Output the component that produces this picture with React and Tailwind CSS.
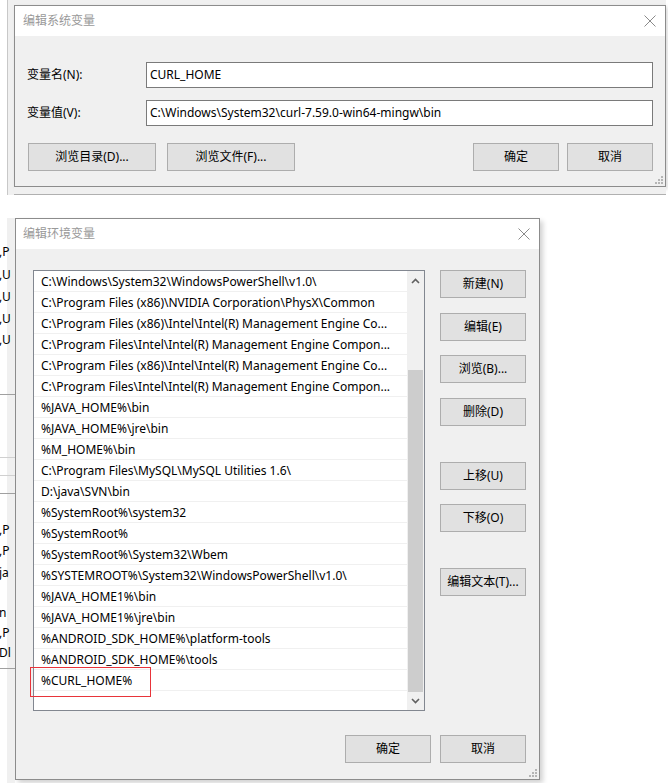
import React from 'react';

const font = { fontFamily: '"Noto Sans", "Noto Sans CJK SC", sans-serif' };

const paths = [
    'C:\\Windows\\System32\\WindowsPowerShell\\v1.0\\',
    'C:\\Program Files (x86)\\NVIDIA Corporation\\PhysX\\Common',
    'C:\\Program Files (x86)\\Intel\\Intel(R) Management Engine Co...',
    'C:\\Program Files\\Intel\\Intel(R) Management Engine Compon...',
    'C:\\Program Files (x86)\\Intel\\Intel(R) Management Engine Co...',
    'C:\\Program Files\\Intel\\Intel(R) Management Engine Compon...',
    '%JAVA_HOME%\\bin',
    '%JAVA_HOME%\\jre\\bin',
    '%M_HOME%\\bin',
    'C:\\Program Files\\MySQL\\MySQL Utilities 1.6\\',
    'D:\\java\\SVN\\bin',
    '%SystemRoot%\\system32',
    '%SystemRoot%',
    '%SystemRoot%\\System32\\Wbem',
    '%SYSTEMROOT%\\System32\\WindowsPowerShell\\v1.0\\',
    '%JAVA_HOME1%\\bin',
    '%JAVA_HOME1%\\jre\\bin',
    '%ANDROID_SDK_HOME%\\platform-tools',
    '%ANDROID_SDK_HOME%\\tools',
    '%CURL_HOME%',
    '',
];

function Btn({ children, className = '' }) {
    return (
        <div className={`flex items-center justify-center border border-[#adadad] bg-[#e1e1e1] text-[12px] text-black ${className}`}>
            {children}
        </div>
    );
}

function CloseX() {
    return (
        <svg width="12" height="12" viewBox="0 0 12 12">
            <path d="M0.5 0.5 L11.5 11.5 M11.5 0.5 L0.5 11.5" stroke="#8a8a8a" strokeWidth="1" fill="none" />
        </svg>
    );
}

function Grip() {
    return (
        <svg width="8" height="8" viewBox="0 0 8 8">
            <rect x="6" y="0" width="2" height="2" fill="#b5b5b5" />
            <rect x="3" y="3" width="2" height="2" fill="#b5b5b5" />
            <rect x="6" y="3" width="2" height="2" fill="#b5b5b5" />
            <rect x="0" y="6" width="2" height="2" fill="#b5b5b5" />
            <rect x="3" y="6" width="2" height="2" fill="#b5b5b5" />
            <rect x="6" y="6" width="2" height="2" fill="#b5b5b5" />
        </svg>
    );
}

function Chevron({ up }) {
    return (
        <svg width="9" height="6" viewBox="0 0 9 6">
            <path d={up ? 'M1 5 L4.5 1.5 L8 5' : 'M1 1 L4.5 4.5 L8 1'} stroke="#606060" strokeWidth="1.6" fill="none" />
        </svg>
    );
}

function SystemVarDialog() {
    return (
        <div className="flex h-[182px] w-[652px] shrink-0 flex-col border border-[#8c8c8c] bg-[#f0f0f0] shadow-[2px_2px_4px_rgba(0,0,0,0.15)]">
            <div className="flex h-[30px] items-center justify-between bg-white pl-[8px] pr-[9px]">
                <span className="text-[12px] text-[#999999]">编辑系统变量</span>
                <CloseX />
            </div>
            <div className="flex flex-1 flex-col px-[12px] pt-[26px]">
                <div className="flex items-center">
                    <span className="w-[119px] text-[12px] text-black">变量名(N):</span>
                    <div className="flex h-[26px] flex-1 items-center border border-[#7a7a7a] bg-white px-[3px] text-[12px] text-black">CURL_HOME</div>
                </div>
                <div className="mt-[12px] flex items-center">
                    <span className="w-[119px] text-[12px] text-black">变量值(V):</span>
                    <div className="flex h-[26px] flex-1 items-center border border-[#7a7a7a] bg-white px-[3px] text-[12px] text-black">
                        C:\Windows\System32\curl-7.59.0-win64-mingw\bin
                    </div>
                </div>
                <div className="mt-[17px] flex items-center">
                    <Btn className="ml-[1px] h-[28px] w-[128px]">浏览目录(D)...</Btn>
                    <Btn className="ml-[11px] h-[28px] w-[128px]">浏览文件(F)...</Btn>
                    <Btn className="ml-auto h-[28px] w-[86px]">确定</Btn>
                    <Btn className="ml-[8px] h-[28px] w-[86px]">取消</Btn>
                </div>
                <div className="mt-auto flex justify-end pb-[2px] -mr-[10px]">
                    <Grip />
                </div>
            </div>
        </div>
    );
}

function EnvVarDialog() {
    return (
        <div className="flex h-[562px] w-[525px] shrink-0 flex-col border border-[#8c8c8c] bg-[#f0f0f0] shadow-[3px_3px_5px_rgba(0,0,0,0.18)]">
            <div className="flex h-[30px] items-center justify-between bg-white pl-[7px] pr-[9px]">
                <span className="text-[12px] text-[#999999]">编辑环境变量</span>
                <CloseX />
            </div>
            <div className="flex flex-1 flex-col pl-[17px] pr-[13px] pt-[21px]">
                <div className="flex">
                    <div className="flex h-[441px] w-[392px] border border-[#828790] bg-white">
                        <div className="flex min-w-0 flex-1 flex-col overflow-hidden">
                            {paths.map((p, i) => (
                                <div key={i} className="flex h-[21px] shrink-0 items-center border-b border-[#f0f0f0] pl-[7px] pt-[2px] text-[12px] whitespace-nowrap text-black">
                                    {p}
                                </div>
                            ))}
                        </div>
                        <div className="flex w-[17px] shrink-0 flex-col bg-[#f0f0f0]">
                            <div className="flex h-[20px] items-center justify-center">
                                <Chevron up />
                            </div>
                            <div className="mx-[1px] mt-[79px] h-[322px] bg-[#cdcdcd]" />
                            <div className="flex flex-1 items-center justify-center">
                                <Chevron />
                            </div>
                        </div>
                    </div>
                    <div className="ml-[15px] flex flex-col">
                        <Btn className="h-[28px] w-[86px]">新建(N)</Btn>
                        <Btn className="mt-[15px] h-[28px] w-[86px]">编辑(E)</Btn>
                        <Btn className="mt-[14px] h-[28px] w-[86px]">浏览(B)...</Btn>
                        <Btn className="mt-[15px] h-[28px] w-[86px]">删除(D)</Btn>
                        <Btn className="mt-[36px] h-[28px] w-[86px]">上移(U)</Btn>
                        <Btn className="mt-[14px] h-[28px] w-[86px]">下移(O)</Btn>
                        <Btn className="mt-[36px] h-[28px] w-[86px]">编辑文本(T)...</Btn>
                    </div>
                </div>
                <div className="mt-[24px] flex justify-end">
                    <Btn className="h-[28px] w-[86px]">确定</Btn>
                    <Btn className="ml-[9px] h-[28px] w-[86px]">取消</Btn>
                </div>
                <div className="mt-auto flex justify-end pb-[2px] -mr-[11px]">
                    <Grip />
                </div>
            </div>
        </div>
    );
}

function LeftPeek() {
    const bits = [
        [252, ',P'], [275, ',U'], [297, ',U'], [319, ',U'], [340, ',U'],
        [530, ',P'], [551, ',P'], [573, 'ja'], [613, 'n'], [633, ',P'], [653, 'Dl'],
    ];
    return (
        <div className="relative h-[565px] w-[15px] shrink-0 overflow-hidden bg-white">
            <div className="absolute left-[7px] top-0 h-full w-[8px] bg-[#f0f0f0]" />
            <div className="absolute left-0 top-[176px] h-px w-full bg-[#a0a0a0]" />
            <div className="absolute left-0 top-[239px] h-px w-full bg-[#d0d0d0]" />
            <div className="absolute left-0 top-[257px] h-px w-full bg-[#d0d0d0]" />
            <div className="absolute left-0 top-[275px] h-px w-full bg-[#a0a0a0]" />
            <div className="absolute left-0 top-[450px] h-px w-full bg-[#a0a0a0]" />
            {bits.map(([y, t]) => (
                <span key={y} className="absolute -left-[1px] text-[12px] leading-none text-black" style={{ top: y - 218 - 6 }}>
                    {t}
                </span>
            ))}
        </div>
    );
}

export default function App() {
    return (
        <div className="relative h-[783px] w-[668px] overflow-hidden bg-white" style={font}>
            <div className="flex h-[195px]">
                <div className="ml-[7px] h-[195px] w-[7px] shrink-0 border-l border-[#c8c8c8] bg-[#f0f0f0]" />
                <div className="flex flex-col">
                    <div className="h-[5px] w-[652px] bg-[#f0f0f0]" />
                    <SystemVarDialog />
                    <div className="h-[8px] border-b border-[#b0b0b0] bg-[#f0f0f0]" />
                </div>
            </div>
            <div className="mt-[23px] flex">
                <LeftPeek />
                <EnvVarDialog />
            </div>
            <div className="absolute left-[30px] top-[667px] h-[30px] w-[121px] border border-[#e8343a]" />
        </div>
    );
}
